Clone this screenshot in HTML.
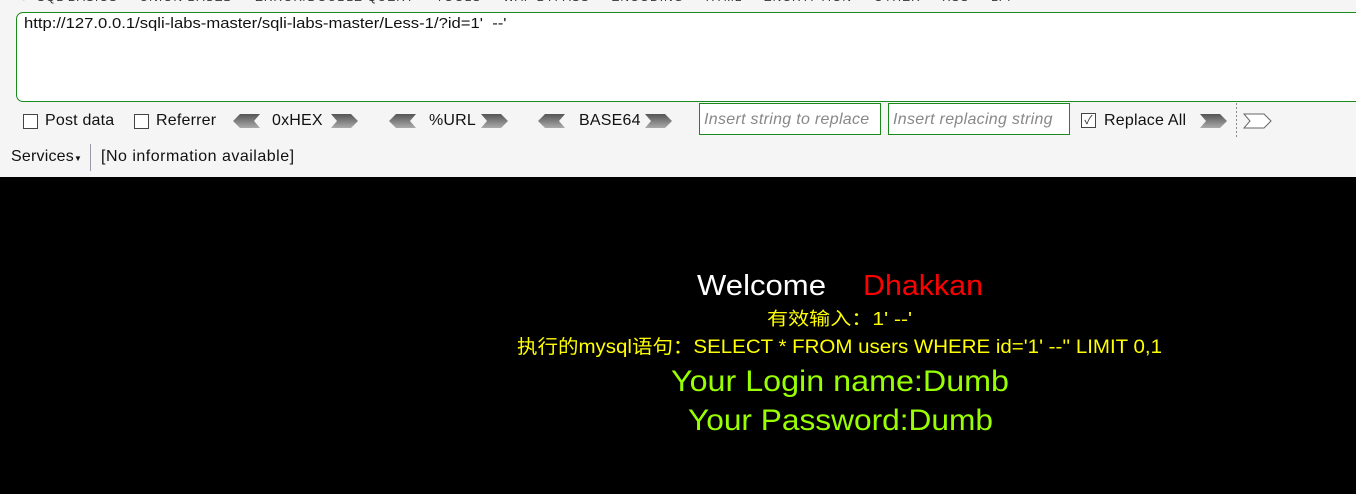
<!DOCTYPE html>
<html><head><meta charset="utf-8"><style>
html,body{margin:0;padding:0;width:1356px;height:494px;overflow:hidden;background:#000;}
.top{position:absolute;left:0;top:0;width:1356px;height:177px;background:#f5f5f5;font-family:"Liberation Sans","Noto Sans CJK SC",sans-serif;}
.t{position:absolute;font-size:16px;color:#111;white-space:nowrap;letter-spacing:0.2px;}
.ta{position:absolute;left:16px;top:12px;width:1360px;height:88px;border:1px solid #1a8a1a;border-radius:7px;background:#fff;}
.cb{position:absolute;width:13px;height:13px;border:1px solid #444;background:#fff;}
.inp{position:absolute;top:103px;height:32px;border:1px solid #1a8a1a;background:#fff;box-sizing:border-box;font-style:italic;color:#888;font-size:16px;line-height:32px;padding-left:4px;white-space:nowrap;overflow:hidden;letter-spacing:0.3px;}
</style></head><body>
<div class="top">
<div class="t" style="left:20px;top:-10px;font-size:12px;color:#333;letter-spacing:1px;"><span style="color:#4a4">●</span>&nbsp; SQL BASICS &nbsp;&nbsp;&nbsp; UNION BASED &nbsp;&nbsp;&nbsp; ERROR/DOUBLE QUERY &nbsp;&nbsp;&nbsp; TOOLS &nbsp;&nbsp;&nbsp; WAF BYPASS &nbsp;&nbsp;&nbsp; ENCODING &nbsp;&nbsp;&nbsp; HTML &nbsp;&nbsp;&nbsp; ENCRYPTION &nbsp;&nbsp;&nbsp; OTHER &nbsp;&nbsp;&nbsp; XSS &nbsp;&nbsp;&nbsp; LFI</div>
<div class="ta"></div>
<div class="t" style="left:24px;top:15px;font-size:15px;letter-spacing:0;transform:scaleX(1.11);transform-origin:0 0;">http://127.0.0.1/sqli-labs-master/sqli-labs-master/Less-1/?id=1'&nbsp; --'</div>

<div class="cb" style="left:23px;top:114px;"></div>
<div class="t" style="left:45px;top:112px;">Post data</div>
<div class="cb" style="left:134px;top:114px;"></div>
<div class="t" style="left:156px;top:112px;">Referrer</div>

<svg style="position:absolute;left:0;top:0" width="1356" height="177">
<defs><linearGradient id="g" x1="0" y1="0" x2="0" y2="1"><stop offset="0" stop-color="#555"/><stop offset="1" stop-color="#aaa"/></linearGradient></defs>
<g fill="url(#g)">
<polygon points="240,114 260,114 254,121 260,128 240,128 233,121"/>
<polygon points="331,114 351,114 358,121 351,128 331,128 337,121"/>
<polygon points="396,114 416,114 410,121 416,128 396,128 389,121"/>
<polygon points="481,114 501,114 508,121 501,128 481,128 487,121"/>
<polygon points="545,114 565,114 559,121 565,128 545,128 538,121"/>
<polygon points="645,114 665,114 672,121 665,128 645,128 651,121"/>
<polygon points="1200,114 1220,114 1227,121 1220,128 1200,128 1206,121"/>
</g>
<polygon points="1244,114 1264,114 1271,121 1264,128 1244,128 1250,121" fill="#fff" stroke="#666"/>
<line x1="1236.5" y1="103" x2="1236.5" y2="137" stroke="#888" stroke-dasharray="2,2"/>
<line x1="90.5" y1="144" x2="90.5" y2="171" stroke="#99a"/>
</svg>
<div class="t" style="left:272px;top:112px;">0xHEX</div>
<div class="t" style="left:429px;top:112px;">%URL</div>
<div class="t" style="left:579px;top:112px;">BASE64</div>
<div class="inp" style="left:699px;width:182px;">Insert string to replace</div>
<div class="inp" style="left:888px;width:182px;">Insert replacing string</div>
<div class="cb" style="left:1081px;top:113px;font-size:12px;line-height:13px;text-align:center;color:#333;">✓</div>
<div class="t" style="left:1104px;top:112px;">Replace All</div>
<div class="t" style="left:11px;top:148px;">Services<span style="font-size:8px;">▼</span></div>
<div class="t" style="left:101px;top:148px;letter-spacing:0.5px;">[No information available]</div>
</div>
<svg style="position:absolute;left:0;top:0" width="1356" height="494" font-family="Liberation Sans, Noto Sans CJK SC, sans-serif">
<text x="697" y="295" font-size="29" fill="#fff" textLength="129" lengthAdjust="spacingAndGlyphs">Welcome</text>
<text x="863" y="295" font-size="29" fill="#f00" textLength="120" lengthAdjust="spacingAndGlyphs">Dhakkan</text>
<text x="767" y="325" font-size="18" fill="#ff0" textLength="145" lengthAdjust="spacingAndGlyphs">有效输入：1' --'</text>
<text x="517" y="353" font-size="19" fill="#ff0" textLength="645" lengthAdjust="spacingAndGlyphs">执行的mysql语句：SELECT * FROM users WHERE id='1' --'' LIMIT 0,1</text>
<text x="671" y="391" font-size="30" fill="#99ff00" textLength="338" lengthAdjust="spacingAndGlyphs">Your Login name:Dumb</text>
<text x="688" y="430" font-size="30" fill="#99ff00" textLength="305" lengthAdjust="spacingAndGlyphs">Your Password:Dumb</text>
</svg>
</body></html>
